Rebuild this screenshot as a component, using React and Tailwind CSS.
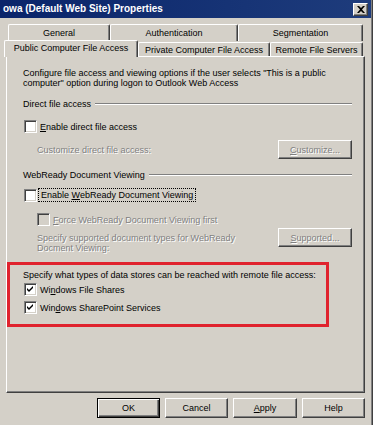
import React from "react";

const font = { fontFamily: '"Liberation Sans", Arial, sans-serif' };

const CheckBox = ({ checked, disabled }) => (
  <span
    className={`w-[13px] h-[13px] shrink-0 flex items-center justify-center border border-t-[#808080] border-l-[#808080] border-b-white border-r-white shadow-[inset_1px_1px_0_#404040,inset_-1px_-1px_0_#d4d0c8] ${
      disabled ? "bg-[#d4d0c8]" : "bg-white"
    }`}
  >
    {checked && (
      <svg width="7" height="7" viewBox="0 0 7 7">
        <path d="M0 2 L2 4 L6 0 L6 2 L2 6 L0 4 Z" fill="#000" />
      </svg>
    )}
  </span>
);

const Btn = ({ children, def, disabled, w = "w-[63px]", h = "h-[20px]" }) => (
  <div
    className={`${w} ${h} flex items-center justify-center border ${
      def
        ? "border-black shadow-[inset_1px_1px_0_#fff,inset_-1px_-1px_0_#404040,inset_-2px_-2px_0_#808080]"
        : "border-t-white border-l-white border-b-[#404040] border-r-[#404040] shadow-[inset_-1px_-1px_0_#808080]"
    } ${disabled ? "text-[#808080] [text-shadow:1px_1px_0_#fff]" : "text-black"}`}
  >
    {children}
  </div>
);

const Tab = ({ label, w, h = "h-[17px]", selected }) => (
  <div
    className={`${w} ${h} flex items-center justify-center border-l border-t border-white rounded-t-[2px] shadow-[inset_-1px_0_0_#808080] border-r border-r-[#404040] bg-[#d4d0c8] ${
      selected ? "relative z-10 mb-[-1px] pb-[2px]" : ""
    }`}
  >
    {label}
  </div>
);

const Separator = () => (
  <div className="flex-1 ml-[4px] border-t border-t-[#808080] border-b border-b-white" />
);

export default function App() {
  return (
    <div
      className="w-[373px] h-[425px] bg-[#d4d0c8] text-[9px] leading-[10px] text-black overflow-hidden shadow-[inset_-1px_0_0_#404040,inset_-2px_0_0_#808080]"
      style={font}
    >
      {/* title bar */}
      <div className="h-[18px] w-[371px] flex items-center justify-between bg-gradient-to-r from-[#0a246a] to-[#1e3c7c] pl-[3px] pr-[3px]">
        <span className="text-white font-bold text-[10px]">owa (Default Web Site) Properties</span>
        <div className="w-[15px] h-[13px] bg-[#d4d0c8] border border-t-white border-l-white border-b-[#404040] border-r-[#404040] shadow-[inset_-1px_-1px_0_#808080] flex items-center justify-center">
          <svg width="8" height="7" viewBox="0 0 8 7">
            <path d="M0 0 L2 0 L4 2 L6 0 L8 0 L5 3.5 L8 7 L6 7 L4 5 L2 7 L0 7 L3 3.5 Z" fill="#000" />
          </svg>
        </div>
      </div>

      {/* back tab row */}
      <div className="mt-[6px] ml-[8px] flex">
        <Tab label="General" w="w-[102px]" />
        <Tab label="Authentication" w="w-[128px]" />
        <Tab label="Segmentation" w="w-[125px]" />
      </div>

      {/* front tab row */}
      <div className="ml-[4px] h-[15px] flex items-end">
        <Tab label="Public Computer File Access" w="w-[134px]" h="h-[17px]" selected />
        <Tab label="Private Computer File Access" w="w-[132px]" h="h-[14px]" />
        <Tab label="Remote File Servers" w="w-[93px]" h="h-[14px]" />
      </div>

      {/* panel */}
      <div className="ml-[6px] w-[359px] h-[337px] border-l border-t border-white border-r border-b border-r-[#404040] border-b-[#404040] shadow-[inset_-1px_-1px_0_#808080]">
        <div className="pl-[16px] mt-[11px] pr-[16px]">
          Configure file access and viewing options if the user selects "This is a public computer" option during logon to Outlook Web Access
        </div>

        <div className="mt-[11px] pl-[16px] pr-[12px] flex items-center">
          <span>Direct file access</span>
          <Separator />
        </div>

        <div className="mt-[11px] pl-[17px] flex items-center">
          <CheckBox />
          <span className="ml-[3px]">
            <u>E</u>nable direct file access
          </span>
        </div>

        <div className="mt-[7px] pl-[30px] pr-[12px] flex items-center justify-between">
          <span className="text-[#808080] [text-shadow:1px_1px_0_#fff]">Customize direct file access:</span>
          <Btn disabled w="w-[74px]" h="h-[19px]">
            <span>
              <u>C</u>ustomize...
            </span>
          </Btn>
        </div>

        <div className="mt-[11px] pl-[16px] pr-[12px] flex items-center">
          <span>WebReady Document Viewing</span>
          <Separator />
        </div>

        <div className="mt-[8px] pl-[17px] flex items-center">
          <CheckBox />
          <span className="ml-[1px] px-[2px] py-[1px] border border-dotted border-black">
            Enable <u>W</u>ebReady Document Viewing
          </span>
        </div>

        <div className="mt-[11px] pl-[30px] flex items-center">
          <CheckBox disabled />
          <span className="ml-[3px] text-[#808080] [text-shadow:1px_1px_0_#fff]">
            <u>F</u>orce WebReady Document Viewing first
          </span>
        </div>

        <div className="mt-[2px] pl-[30px] pr-[12px] flex items-start justify-between">
          <span className="mt-[5px] w-[215px] text-[#808080] [text-shadow:1px_1px_0_#fff]">
            Specify supported document types for WebReady
            <br />
            Docment Viewing:
          </span>
          <Btn disabled w="w-[74px]" h="h-[19px]">
            <span>
              <u>S</u>upported...
            </span>
          </Btn>
        </div>

        <div className="mt-[9px] w-[322px] h-[65px] border-[3px] border-[#e0232e] pl-[13px] pt-[5px]">
          <div>Specify what types of data stores can be reached with remote file access:</div>
          <div className="mt-[3px] ml-[1px] flex items-center">
            <CheckBox checked />
            <span className="ml-[3px]">
              Wi<u>n</u>dows File Shares
            </span>
          </div>
          <div className="mt-[5px] ml-[1px] flex items-center">
            <CheckBox checked />
            <span className="ml-[3px]">
              Win<u>d</u>ows SharePoint Services
            </span>
          </div>
        </div>
      </div>

      {/* buttons */}
      <div className="mt-[5px] ml-[97px] flex gap-[5px]">
        <Btn def>OK</Btn>
        <Btn>Cancel</Btn>
        <Btn w="w-[64px]">
          <span>
            <u>A</u>pply
          </span>
        </Btn>
        <Btn>Help</Btn>
      </div>
    </div>
  );
}
